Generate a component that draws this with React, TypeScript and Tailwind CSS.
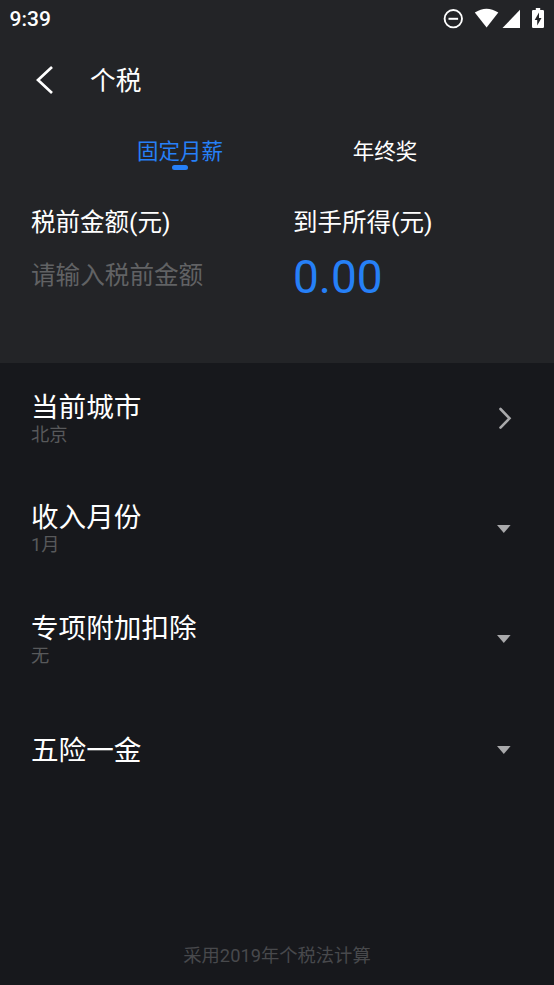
type Row = { title: string; value?: string; arrow: "right" | "down" };

const rows: Row[] = [
  { title: "当前城市", value: "北京", arrow: "right" },
  { title: "收入月份", value: "1月", arrow: "down" },
  { title: "专项附加扣除", value: "无", arrow: "down" },
  { title: "五险一金", arrow: "down" },
];

function StatusBar() {
  return (
    <div className="flex h-[38px] items-center justify-between pl-[9.500px] pr-[9px]">
      <span className="text-[21px] font-medium leading-[38px]">9:39</span>
      <svg width="104" height="24" viewBox="441 7 104 24" fill="#fff">
        <circle cx="453.300" cy="18.700" r="8.700" fill="none" stroke="#fff" strokeWidth="1.900" />
        <path d="M448.500 17.800h9.600v2h-9.600z" />
        <path d="M474.800 12.600Q486.500 5 498.300 12.600L486.600 27.500Z" />
        <path d="M520 9.800V28H502.500Z" />
        <path
          fillRule="evenodd"
          d="M535.800 8h4.400v2h2.600q1.200 0 1.200 1.200v15.600q0 1.200-1.200 1.200h-9.600q-1.200 0-1.200-1.200V11.200q0-1.200 1.200-1.200h2.600ZM539 12.500l-4.300 7.500h2.500v5.500l4.300-7.500H539Z"
        />
      </svg>
    </div>
  );
}

function ListRow({ title, value, arrow }: Row) {
  return (
    <button className="flex h-[110.600px] w-full items-center justify-between pl-[31px] text-left">
      <span className="flex flex-col pt-px">
        <span className="text-[27.600px] leading-[32px]">{title}</span>
        {value && <span className="text-[18.300px] leading-[22px] text-[#58595b]">{value}</span>}
      </span>
      {arrow === "right" ? (
        <svg className="mr-[41px]" width="16" height="24" viewBox="0 0 16 24" fill="none" stroke="#a9a9ab" strokeWidth="2.600" strokeLinecap="round">
          <path d="M3.500 3l9 9.300-9 9.300" />
        </svg>
      ) : (
        <svg className="mr-[43px]" width="14" height="8" viewBox="0 0 14 8" fill="#a9a9ab">
          <path d="M0 0h13.600L6.800 8z" />
        </svg>
      )}
    </button>
  );
}

export default function App() {
  return (
    <div className="flex h-[985px] w-[554px] flex-col overflow-hidden bg-[#17181c] font-[Roboto,'Noto_Sans_CJK_SC',sans-serif] text-white">
      <header className="h-[363px] bg-[#232427]">
        <StatusBar />
        <div className="flex h-[84px] items-center">
          <svg className="ml-[35px]" width="20" height="30" viewBox="0 0 20 30" fill="none" stroke="#fff" strokeWidth="2.700">
            <path d="M17 2L3 15l14 13" />
          </svg>
          <h1 className="ml-[35px] pt-px text-[25.700px] leading-[36px]">个税</h1>
        </div>
        <nav className="flex h-[56px] pl-[77px] text-[21.500px] leading-[30px]">
          <div className="flex w-[206px] flex-col items-center pt-[15px] text-[#2680f7]">
            <span>固定月薪</span>
            <span className="-mt-[2px] h-[5px] w-4 rounded-full bg-[#2680f7]" />
          </div>
          <div className="flex w-[204px] flex-col items-center pt-[15px]">年终奖</div>
        </nav>
        <div className="flex pt-[27px] pl-[31px] leading-[36px]">
          <div className="w-[262px]">
            <div className="text-[24.500px]">税前金额(元)</div>
            <div className="pt-[17px] text-[24.600px] text-[#616264]">请输入税前金额</div>
          </div>
          <div>
            <div className="text-[24.500px]">到手所得(元)</div>
            <div className="pt-[7px] text-[46px] leading-[58px] text-[#2680f7]">0.00</div>
          </div>
        </div>
      </header>
      <main className="flex-1">
        {rows.map((row) => (
          <ListRow key={row.title} {...row} />
        ))}
      </main>
      <footer className="pb-[15px] text-center text-[18.300px] leading-[28px] text-[#48494c]">采用2019年个税法计算</footer>
    </div>
  );
}
